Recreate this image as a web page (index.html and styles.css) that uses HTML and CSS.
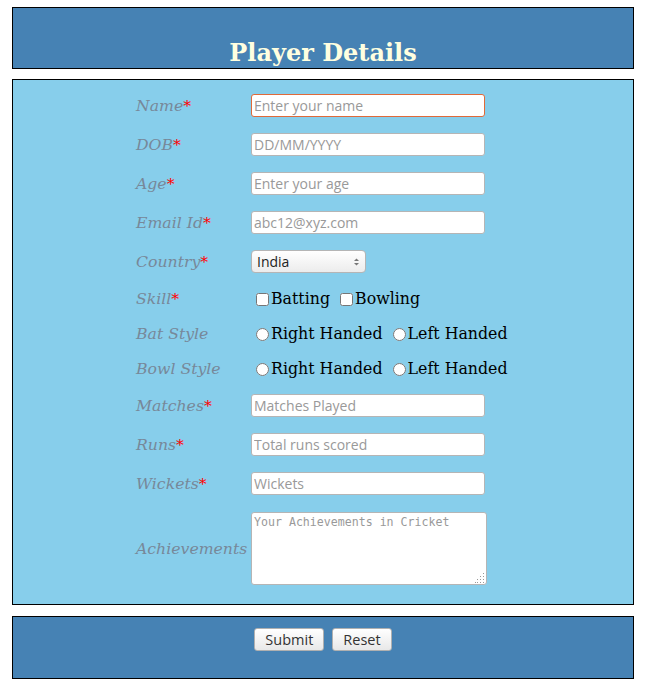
FILE: index.html
```html
<!DOCTYPE html>
<html>
<head>
<meta charset="utf-8">
<title>Player Details</title>
<link rel="stylesheet" href="styles.css">
</head>
<body>
<header class="head">
  <h1 class="title">Player Details</h1>
</header>
<form class="main">
  <div class="grid">
    <label class="lbl">Name<span class="req">*</span></label>
    <div class="field"><input class="txt focus" type="text" placeholder="Enter your name"></div>

    <label class="lbl">DOB<span class="req">*</span></label>
    <div class="field"><input class="txt" type="text" placeholder="DD/MM/YYYY"></div>

    <label class="lbl">Age<span class="req">*</span></label>
    <div class="field"><input class="txt" type="text" placeholder="Enter your age"></div>

    <label class="lbl">Email Id<span class="req">*</span></label>
    <div class="field"><input class="txt" type="text" placeholder="abc12@xyz.com"></div>

    <label class="lbl">Country<span class="req">*</span></label>
    <div class="field">
      <span class="selwrap">
        <select class="sel"><option>India</option></select>
        <svg class="arrows" width="7" height="10" viewBox="0 0 7 10"><path d="M1 4 L3.5 1.5 L6 4 Z" fill="#777"/><path d="M1 6 L3.5 8.5 L6 6 Z" fill="#777"/></svg>
      </span>
    </div>

    <label class="lbl small">Skill<span class="req">*</span></label>
    <div class="field opts"><input type="checkbox" class="box">Batting <input type="checkbox" class="box">Bowling</div>

    <label class="lbl small">Bat Style</label>
    <div class="field opts"><input type="radio" name="bat" class="rad">Right Handed <input type="radio" name="bat" class="rad">Left Handed</div>

    <label class="lbl small">Bowl Style</label>
    <div class="field opts"><input type="radio" name="bowl" class="rad">Right Handed <input type="radio" name="bowl" class="rad">Left Handed</div>

    <label class="lbl">Matches<span class="req">*</span></label>
    <div class="field"><input class="txt" type="text" placeholder="Matches Played"></div>

    <label class="lbl">Runs<span class="req">*</span></label>
    <div class="field"><input class="txt" type="text" placeholder="Total runs scored"></div>

    <label class="lbl">Wickets<span class="req">*</span></label>
    <div class="field"><input class="txt" type="text" placeholder="Wickets"></div>

    <label class="lbl">Achievements</label>
    <div class="field">
      <span class="areawrap">
        <textarea class="area" placeholder="Your Achievements in Cricket"></textarea>
        <svg class="grip" width="10" height="10" viewBox="0 0 10 10" fill="#999">
          <rect x="8" y="0" width="1" height="1"/>
          <rect x="5" y="3" width="1" height="1"/><rect x="8" y="3" width="1" height="1"/>
          <rect x="2" y="6" width="1" height="1"/><rect x="5" y="6" width="1" height="1"/><rect x="8" y="6" width="1" height="1"/>
          <rect x="0" y="9" width="1" height="1"/><rect x="2" y="9" width="1" height="1"/><rect x="5" y="9" width="1" height="1"/><rect x="8" y="9" width="1" height="1"/>
        </svg>
      </span>
    </div>
  </div>
</form>
<footer class="foot">
  <button class="btn" type="button">Submit</button>
  <button class="btn" type="button">Reset</button>
</footer>
</body>
</html>
```
FILE: styles.css
```css
html, body { background: #fff; }
body {
  margin: 7px 13px 0 12px;
  font-family: "DejaVu Serif", serif;
}
.head {
  background: #4682b4;
  border: 1px solid #000;
  height: 60px;
  display: flex;
  align-items: flex-end;
  justify-content: center;
}
.title {
  margin: 0 0 1px 0;
  font-family: "DejaVu Serif", serif;
  font-weight: bold;
  font-size: 24px;
  line-height: 28px;
  color: #ffffe0;
}
.main {
  margin-top: 10px;
  background: #87ceeb;
  border: 1px solid #000;
  padding: 14px 0 19px;
}
.grid {
  display: grid;
  grid-template-columns: 115px 259px;
  justify-content: center;
  row-gap: 16px;
}
.lbl {
  font-style: italic;
  font-size: 15.7px;
  color: #778899;
  display: flex;
  align-items: center;
  white-space: nowrap;
}
.req { color: red; }
.field {
  display: flex;
  align-items: center;
}
.txt {
  box-sizing: border-box;
  width: 234px;
  height: 23px;
  margin: 0;
  padding: 0 2px;
  border: 1px solid #b5b5b5;
  border-radius: 3px;
  background: #fff;
  font-family: "Open Sans", "DejaVu Sans", sans-serif;
  font-size: 14px;
  color: #333;
  outline: none;
}
.txt.focus { border-color: #e06a3a; }
.txt::placeholder, .area::placeholder { color: #999; opacity: 1; }
.selwrap { position: relative; display: inline-block; height: 23px; }
.sel {
  appearance: none;
  -webkit-appearance: none;
  box-sizing: border-box;
  width: 115px;
  height: 23px;
  margin: 0;
  padding: 0 5px;
  border: 1px solid #b5b5b5;
  border-radius: 4px;
  background: linear-gradient(#ffffff, #ececec);
  font-family: "Open Sans", "DejaVu Sans", sans-serif;
  font-size: 14px;
  color: #222;
}
.arrows { position: absolute; right: 6px; top: 7px; }
.opts {
  font-size: 15.8px;
  color: #000;
  height: 19px;
  white-space: pre;
}
.box, .rad { margin: 2px 2px 0 5px; width: 13px; height: 13px; }
.areawrap { position: relative; display: inline-block; height: 73px; margin-top: 1px; }
.area {
  display: block;
  box-sizing: border-box;
  width: 236px;
  height: 73px;
  margin: 0;
  padding: 2px 2px;
  border: 1px solid #b5b5b5;
  border-radius: 3px;
  background: #fff;
  font-family: "DejaVu Sans Mono", monospace;
  font-size: 11.6px;
  resize: none;
}
.grip { position: absolute; right: 2px; bottom: 2px; }
.foot {
  margin-top: 11px;
  background: #4682b4;
  border: 1px solid #000;
  height: 61px;
  display: flex;
  justify-content: center;
  align-items: flex-start;
  gap: 8px;
}
.btn {
  margin-top: 11px;
  height: 23px;
  padding: 0 10px;
  border: 1px solid #b0b0b0;
  border-radius: 3px;
  background: linear-gradient(#ffffff, #e8e8e8);
  font-family: "Open Sans", "DejaVu Sans", sans-serif;
  font-size: 14.5px;
  color: #333;
}
```
